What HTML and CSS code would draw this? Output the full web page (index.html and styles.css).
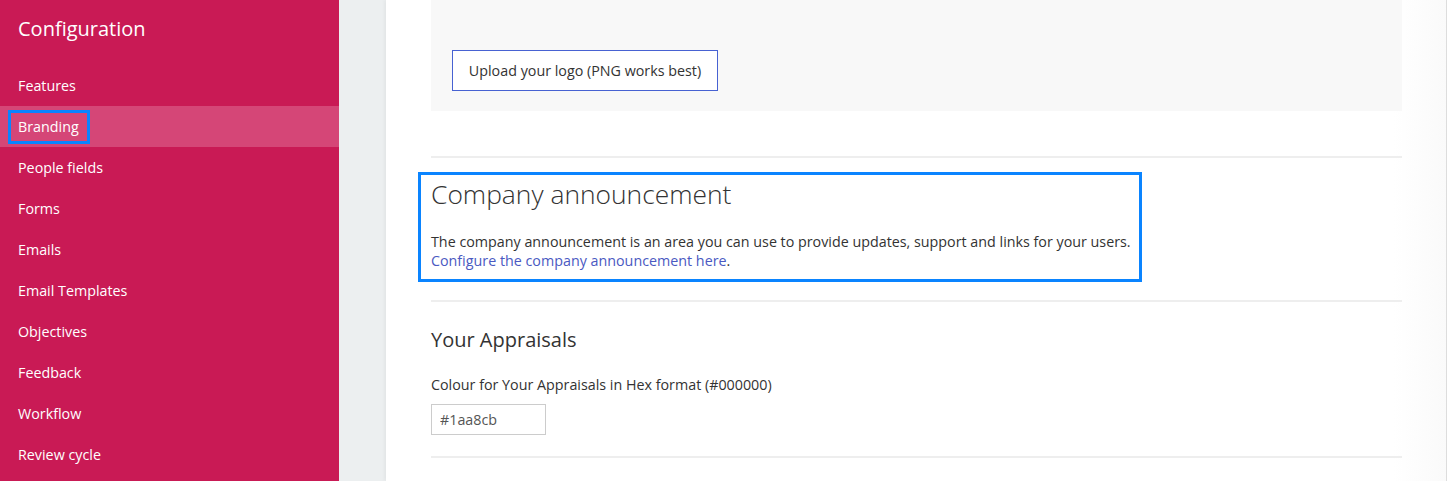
FILE: index.html
```html
<!DOCTYPE html>
<html>
	<head>
		<meta charset="utf-8" />
		<title>Configuration - Branding</title>
		<link rel="stylesheet" href="styles.css">
	</head>
	<body>
	<div class="page">
		<aside class="sidebar">
			<h1 class="sidebar-title">Configuration</h1>
			<ul class="nav">
				<li><a href="#">Features</a></li>
				<li class="active"><a href="#" class="marked">Branding</a></li>
				<li><a href="#">People fields</a></li>
				<li><a href="#">Forms</a></li>
				<li><a href="#">Emails</a></li>
				<li><a href="#">Email Templates</a></li>
				<li><a href="#">Objectives</a></li>
				<li><a href="#">Feedback</a></li>
				<li><a href="#">Workflow</a></li>
				<li><a href="#">Review cycle</a></li>
			</ul>
		</aside>
		<div class="gutter"></div>
		<main class="panel">
			<div class="logo-area">
				<button type="button" class="upload">Upload your logo (PNG works best)</button>
			</div>
			<hr class="divider">
			<section class="announcement marked">
				<h2 class="big-title">Company announcement</h2>
				<p>The company announcement is an area you can use to provide updates, support and links for your users.<br>
				<a href="#">Configure the company announcement here</a>.</p>
			</section>
			<hr class="divider divider-second">
			<section class="appraisals">
				<h3>Your Appraisals</h3>
				<label for="colour">Colour for Your Appraisals in Hex format (#000000)</label>
				<input type="text" id="colour" value="#1aa8cb">
			</section>
			<hr class="divider divider-third">
		</main>
	</div>
	</body>
</html>
```

FILE: styles.css
```css
html,body{
	margin: 0;
	padding: 0;
	height: 100%;
	overflow: hidden;
}
body{
	font-family: "Open Sans", "Liberation Sans", sans-serif;
	font-size: 14.3px;
	color: #333333;
	background-color: #eceff0;
}
.page{
	display: flex;
	height: 100%;
}
.sidebar{
	width: 339px;
	flex: none;
	background-color: #c91a55;
	color: white;
}
.sidebar-title{
	margin: 15px 0 0 18px;
	font-size: 20px;
	font-weight: 400;
	line-height: 28px;
}
.nav{
	list-style: none;
	margin: 22px 0 0 0;
	padding: 0;
}
.nav li{
	height: 41px;
	display: flex;
	align-items: center;
	padding-left: 18px;
}
.nav li.active{
	background-color: #d54677;
	padding-left: 8px;
}
.nav a{
	color: white;
	text-decoration: none;
	font-size: 14.3px;
	font-weight: 500;
	line-height: 20px;
}
.nav a.marked{
	border: 3px solid #0a84ff;
	padding: 4px 8px 4px 7px;
}
.gutter{
	width: 47px;
	flex: none;
}
.panel{
	flex: 1;
	background: linear-gradient(to right, #ffffff 95%, #fafafa 100%);
	border-right: 1px solid #dddddd;
	box-shadow: -2px 0 3px rgba(0,0,0,0.04);
	padding: 0 44px 0 45px;
}
.logo-area{
	background-color: #f8f8f8;
	height: 111px;
	padding: 50px 0 0 21px;
	box-sizing: border-box;
}
.upload{
	font-family: inherit;
	font-size: 14.3px;
	color: #333333;
	background-color: white;
	border: 1px solid #4762d2;
	width: 266px;
	height: 41px;
	padding: 0;
}
.divider{
	border: none;
	border-top: 2px solid #eeeeee;
	margin: 45px 0 0 0;
}
.announcement{
	width: fit-content;
	margin: 14px 0 0 -13px;
	border: 3px solid #0a84ff;
	padding: 0 8px 9px 10px;
}
.big-title{
	margin: 0;
	font-size: 26.4px;
	font-weight: 300;
	line-height: 38px;
}
.announcement p{
	margin: 19px 0 0 0;
	line-height: 19px;
}
.announcement a{
	color: #4a59c2;
	text-decoration: none;
}
.divider-second{
	margin-top: 18px;
}
.appraisals h3{
	margin: 24px 0 0 0;
	font-size: 20px;
	font-weight: 400;
	line-height: 28px;
}
.appraisals label{
	display: block;
	margin-top: 21px;
	line-height: 20px;
}
.appraisals input{
	display: block;
	margin-top: 9px;
	width: 115px;
	height: 31px;
	box-sizing: border-box;
	border: 1px solid #cccccc;
	padding: 0 8px;
	font-family: inherit;
	font-size: 14.3px;
	color: #555555;
}
.divider-third{
	margin-top: 21px;
}
```
